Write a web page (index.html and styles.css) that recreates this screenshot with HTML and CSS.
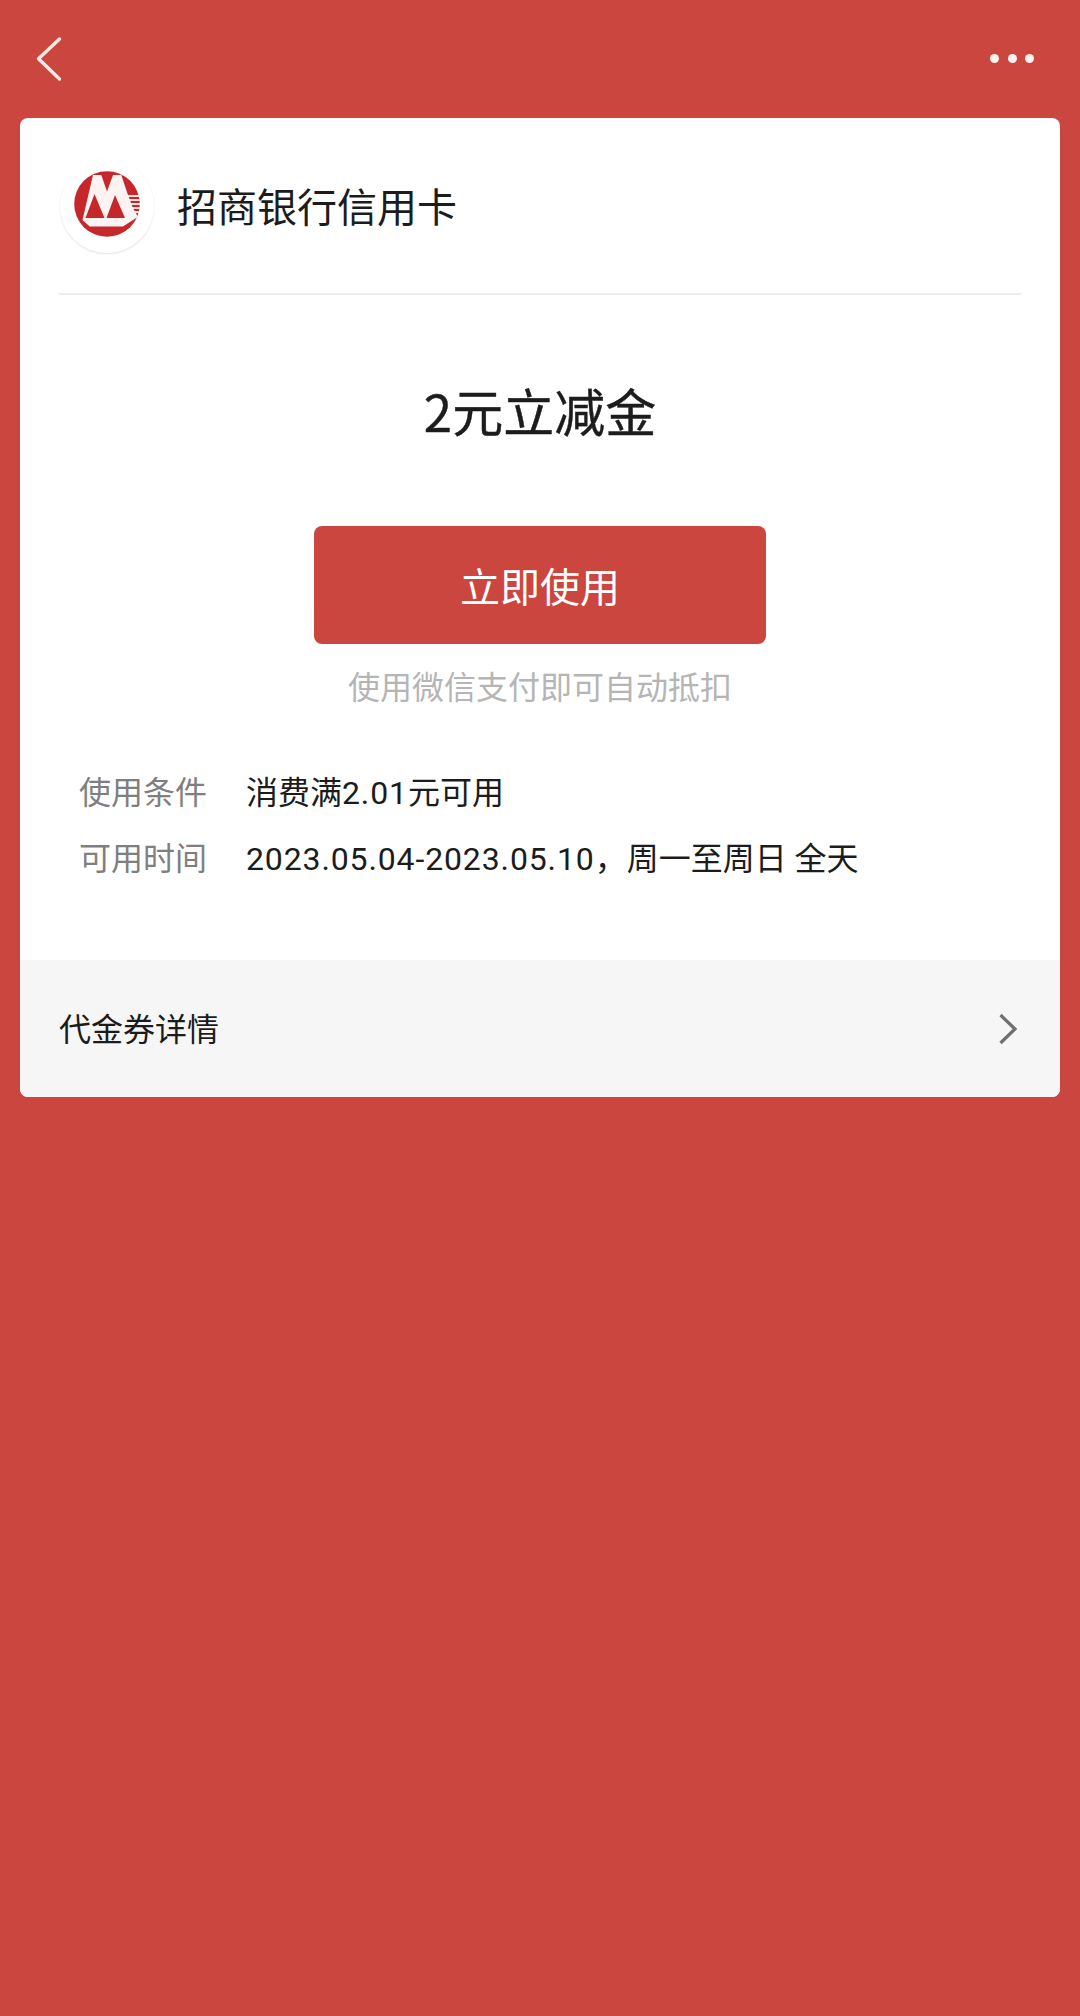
FILE: index.html
```html
<!DOCTYPE html>
<html lang="zh-CN">
<head>
    <meta charset="UTF-8">
    <meta name="viewport" content="width=device-width, initial-scale=1.0">
    <title>2元立减金</title>
    <link rel="stylesheet" href="styles.css">
</head>
<body>
    <div class="topbar">
        <svg class="back" width="28" height="46" viewBox="0 0 28 46">
            <path d="M24.500 3 L3.500 22.800 L24.500 43" fill="none" stroke="#fbe9e6" stroke-width="3.400" stroke-linecap="round" stroke-linejoin="round"/>
        </svg>
        <div class="dots"><span></span><span></span><span></span></div>
    </div>

    <div class="card">
        <div class="brand">
            <div class="logo">
                <svg width="66" height="66" viewBox="0 0 66 66">
                    <circle cx="33" cy="33" r="32.800" fill="#c5272b"/>
                    <path d="M54 25 H66 M54.500 29 H66 M55.500 33 H66 M57 37 H66 M58.500 41 H65" stroke="#f8e2e2" stroke-width="2"/>
                    <path d="M8.500 49 L19 4 H27.300 L33 20.500 L39 4 H47.300 L54 24 L59 37.300 L64 45.700 L49 55.500 H15.700 Z" fill="#fdf3f2"/>
                    <path d="M20.500 23 L11.500 47 H30.500 Z M41 24 L32.500 47 H51 Z" fill="#c5272b"/>
                </svg>
            </div>
            <div class="brand-name">招商银行信用卡</div>
        </div>

        <div class="coupon">
            <h1>2元立减金</h1>
            <button class="use-button">立即使用</button>
            <p class="hint">使用微信支付即可自动抵扣</p>
        </div>

        <div class="rules">
            <div class="rule"><span class="rule-label">使用条件</span><span>消费满<span class="num">2.01</span>元可用</span></div>
            <div class="rule"><span class="rule-label">可用时间</span><span><span class="num">2023.05.04-2023.05.10</span>，周一至周日 全天</span></div>
        </div>

        <div class="detail">
            <span class="detail-text">代金券详情</span>
            <svg width="20" height="32" viewBox="0 0 20 32">
                <path d="M2.500 2 L17 16 L2.500 30" fill="none" stroke="#6f6f6f" stroke-width="3.200"/>
            </svg>
        </div>
    </div>
</body>
</html>
```

FILE: styles.css
```css
body { margin: 0; height: 2016px; background: #cb463e; font-family: "Noto Sans CJK SC", Roboto, sans-serif; color: #1c1c1c; overflow: hidden; }
.topbar { height: 118px; display: flex; align-items: flex-start; justify-content: space-between; padding: 0 46px 0 35px; box-sizing: border-box; }
.back { margin-top: 36px; }
.dots { display: flex; gap: 8.500px; margin-top: 54px; }
.dots span { width: 9px; height: 9px; border-radius: 50%; background: #fff3f0; }
.card { margin: 0 20px; height: 979px; background: white; border-radius: 8px; overflow: hidden; display: flex; flex-direction: column; }
.brand { margin: 0 39px; height: 177px; flex: none; border-bottom: 2px solid #ececec; display: flex; align-items: center; box-sizing: border-box; }
.logo { width: 94px; height: 94px; margin-left: 1px; border-radius: 50%; box-shadow: 0 1px 2px rgba(0,0,0,0.12); display: flex; align-items: center; justify-content: center; }
.logo svg { margin-top: -3px; }
.brand-name { margin-left: 23px; margin-bottom: 2px; font-size: 40px; line-height: 56px; }
.coupon { display: flex; flex-direction: column; align-items: center; }
h1 { margin: 79px 0 0; font-size: 51px; font-weight: 400; line-height: 72px; -webkit-text-stroke: 0.4px #1c1c1c; }
.use-button { margin-top: 80px; width: 452px; height: 118px; flex: none; background: #cb463e; color: white; border: none; border-radius: 8px; font: inherit; font-size: 40px; }
.hint { margin: 19px 0 0; font-size: 32px; line-height: 44px; color: #b5b5b5; }
.rules { margin: 50px 0 0 59px; font-family: Roboto, "Noto Sans CJK SC", sans-serif; font-size: 32px; }
.rule { display: flex; height: 66px; align-items: center; }
.rule-label { width: 167px; color: #7f7f7f; }
.num { letter-spacing: 0.870px; }
.detail { margin-top: auto; height: 137px; flex: none; background: #f6f6f6; display: flex; align-items: center; justify-content: space-between; padding: 0 42px 0 39px; font-size: 32px; }
.detail-text { margin-bottom: 4px; }
```
